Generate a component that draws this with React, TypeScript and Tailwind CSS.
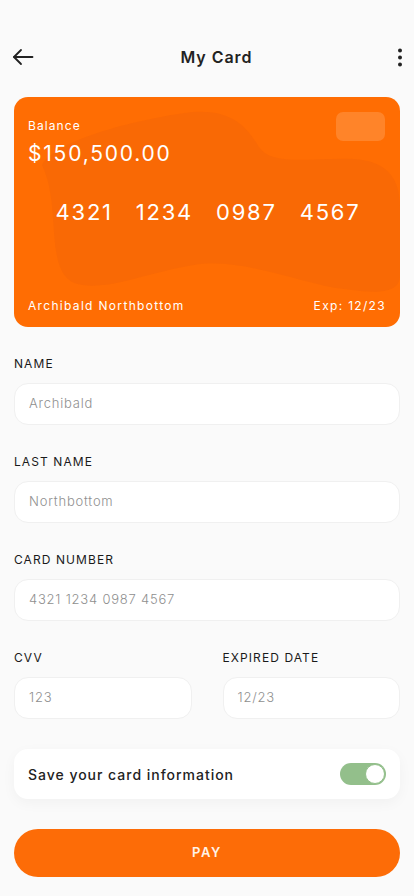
import React from "react";

function Field({ label, value }: { label: string; value: string }) {
  return (
    <div className="flex flex-col">
      <div className="text-[12px] font-normal tracking-[0.09em] text-[#1a1a1a] h-[14px] leading-[14px]">{label}</div>
      <div className="mt-[12px] h-[42px] rounded-[14px] bg-white border border-[#f0f0f0] flex items-center px-[14px] text-[13px] font-light tracking-[0.06em] text-[#8f8f8f]">
        {value}
      </div>
    </div>
  );
}

export default function App() {
  return (
    <div
      className="min-h-[896px] w-[414px] bg-[#fafafa] text-[#222] pt-[42px]"
      style={{ fontFamily: "Inter, 'Noto Sans', sans-serif" }}
    >
      {/* header */}
      <div className="flex items-center justify-between h-[30px] pl-[11px] pr-[8px]">
        <svg width="24" height="24" viewBox="0 0 24 24" fill="none" stroke="#222" strokeWidth="1.8" strokeLinecap="round" strokeLinejoin="round">
          <path d="M21.5 12H3" />
          <path d="M10 5l-7 7 7 7" />
        </svg>
        <div className="text-[16px] font-semibold tracking-[0.06em] ml-[4px]">My Card</div>
        <svg width="12" height="24" viewBox="0 0 12 24" fill="#222">
          <circle cx="6" cy="5.5" r="2" />
          <circle cx="6" cy="12.5" r="2" />
          <circle cx="6" cy="19.5" r="2" />
        </svg>
      </div>

      {/* card */}
      <div className="mx-[14px] mt-[25px] h-[230px] rounded-[14px] bg-[#ff6d03] relative overflow-hidden text-white">
        <svg className="absolute inset-0" width="386" height="230" viewBox="0 0 386 230">
          <path
            d="M28 68 C40 45 110 25 170 16 C215 10 232 28 245 50 C258 70 300 60 340 62 C372 64 386 80 386 110 L386 180 C384 198 360 196 330 192 C290 188 230 160 180 168 C130 176 90 196 60 186 C30 172 48 110 28 68 Z"
            fill="#e25a10"
            opacity="0.2"
          />
        </svg>
        <div className="absolute right-[15px] top-[15px] w-[49px] h-[29px] rounded-[7px] bg-[#ff8a33] opacity-80" />
        <div className="relative flex flex-col h-full px-[14px]">
          <div className="mt-[21px] text-[12px] font-normal tracking-[0.09em] leading-[16px]">Balance</div>
          <div className="mt-[7px] text-[21px] font-normal tracking-[0.085em] leading-[26px]">$150,500.00</div>
          <div className="mt-[31px] flex justify-center gap-[23px] text-[22px] font-normal tracking-[0.08em] leading-[28px] pl-[2px]">
            <span>4321</span>
            <span>1234</span>
            <span>0987</span>
            <span>4567</span>
          </div>
          <div className="mt-auto mb-[13px] flex justify-between text-[12px] font-normal tracking-[0.11em] leading-[16px]">
            <span>Archibald Northbottom</span>
            <span>Exp: 12/23</span>
          </div>
        </div>
      </div>

      {/* form */}
      <div className="px-[14px] mt-[30px] flex flex-col gap-[30px]">
        <Field label="NAME" value="Archibald" />
        <Field label="LAST NAME" value="Northbottom" />
        <Field label="CARD NUMBER" value="4321 1234 0987 4567" />
        <div className="grid grid-cols-2 gap-[31px]">
          <Field label="CVV" value="123" />
          <Field label="EXPIRED DATE" value="12/23" />
        </div>
      </div>

      <div className="mx-[14px] mt-[30px] h-[50px] rounded-[14px] bg-white shadow-[0_4px_14px_rgba(0,0,0,0.04)] flex items-center justify-between pl-[14px] pr-[14px]">
        <span className="text-[14px] font-medium tracking-[0.07em] text-[#222]">Save your card information</span>
        <div className="w-[46px] h-[22px] rounded-full bg-[#93bf8b] flex items-center justify-end pr-[1px]">
          <div className="w-[20px] h-[20px] rounded-full bg-white border border-[#93bf8b]" />
        </div>
      </div>

      <div className="mx-[14px] mt-[30px] h-[48px] rounded-full bg-[#fd6c07] flex items-center justify-center text-[13px] font-semibold tracking-[0.12em] text-[#fff3e8]">
        PAY
      </div>
    </div>
  );
}
